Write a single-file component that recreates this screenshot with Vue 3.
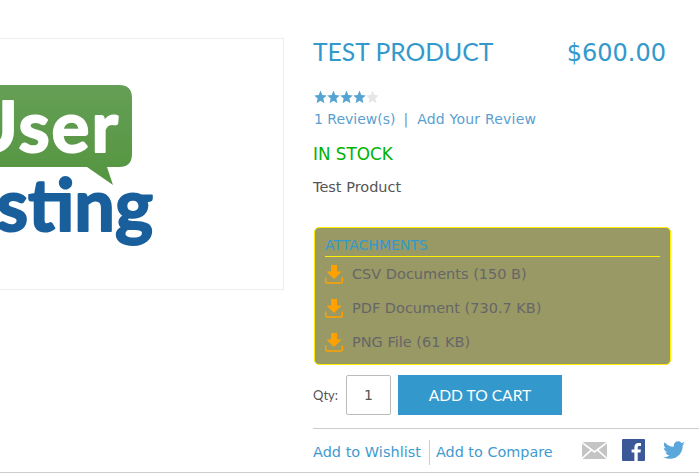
<template>
  <div class="page">
    <div class="gallery">
      <!-- logo picture, cropped on its left side like the page does -->
      <svg class="logo" width="283" height="250" viewBox="0 0 283 250">
        <defs>
          <linearGradient id="bubble" x1="0" y1="0" x2="0" y2="1">
            <stop offset="0" stop-color="#659f56" />
            <stop offset="1" stop-color="#54953f" />
          </linearGradient>
        </defs>
        <path d="M-10 46H119Q132 46 132 59V115Q132 128 119 128H107L113 146L87 128H-10Z" fill="url(#bubble)" />
        <text class="logo-user" x="120" y="113" text-anchor="end">User</text>
        <text class="logo-test" x="153" y="192" text-anchor="end">esting</text>
      </svg>
    </div>

    <div class="info">
      <div class="head">
        <h1 class="title">TEST PRODUCT</h1>
        <div class="price">$600.00</div>
      </div>

      <div class="stars">
        <svg v-for="n in 5" :key="n" width="13" height="14" viewBox="0 0 24 24" preserveAspectRatio="none">
          <path d="M12 1l3.300 7.600 8.200.7-6.200 5.400 1.900 8.100L12 18.500l-7.200 4.300 1.900-8.100L.5 9.300l8.200-.7z" :fill="n < 5 ? '#55a4d2' : '#e6e6e6'" />
        </svg>
      </div>
      <div class="reviews">
        <a>1 Review(s)</a><span class="sep">|</span><a class="add-review">Add Your Review</a>
      </div>

      <div class="stock">IN STOCK</div>
      <p class="short">Test Product</p>

      <div class="attachments">
        <div class="att-title">ATTACHMENTS</div>
        <div v-for="file in files" :key="file" class="att-row">
          <svg width="18" height="19" viewBox="0 0 18 19">
            <path d="M6 0h6v6.500h4.500L9 14 1.500 6.500H6z" fill="#ffa200" />
            <path d="M.7 12.500v3.700q0 1.800 1.800 1.800h13q1.800 0 1.800-1.800v-3.700" fill="none" stroke="#ffa200" stroke-width="1.400" />
          </svg>
          <span>{{ file }}</span>
        </div>
      </div>

      <div class="cart">
        <label class="qty-label">Qty:</label>
        <div class="qty">1</div>
        <button class="add">ADD TO CART</button>
      </div>

      <div class="links">
        <a class="wish">Add to Wishlist</a>
        <a class="compare">Add to Compare</a>
        <div class="share">
          <svg width="25" height="17" viewBox="0 0 25 17">
            <rect width="25" height="17" fill="#c4c4c4" />
            <path d="M0 .5L12.500 10 25 .5M0 16.500L9.500 7.800M25 16.500L15.500 7.800" fill="none" stroke="#fff" stroke-width="1.600" />
          </svg>
          <svg width="23" height="22" viewBox="0 0 23 22">
            <rect width="23" height="22" rx="1" fill="#3b5998" />
            <path d="M15.700 22v-8.400h2.800l.4-3.200h-3.200V8.400c0-.9.300-1.500 1.600-1.500h1.700V4c-.3 0-1.300-.1-2.500-.1-2.400 0-4.100 1.500-4.100 4.200v2.300H9.600v3.200h2.800V22z" fill="#fff" />
          </svg>
          <svg class="bird" width="22" height="19" viewBox="0 0 24 20">
            <path d="M24 2.400c-.9.400-1.800.7-2.800.800 1-.6 1.800-1.600 2.200-2.700-1 .6-2 1-3.100 1.200C19.300.7 18 0 16.600 0c-2.700 0-4.900 2.200-4.900 4.900 0 .4 0 .8.100 1.100C7.700 5.800 4.100 3.900 1.700.9c-.4.700-.7 1.600-.7 2.500 0 1.700.9 3.200 2.200 4.100-.8 0-1.600-.2-2.200-.6v.1c0 2.400 1.700 4.400 3.900 4.800-.4.100-.8.200-1.300.2-.3 0-.6 0-.9-.1.600 2 2.400 3.400 4.600 3.400-1.700 1.300-3.800 2.100-6.100 2.100-.4 0-.8 0-1.200-.1C2.200 18.200 4.800 19 7.500 19c9.100 0 14-7.500 14-14v-.6c1-.7 1.800-1.500 2.500-2z" fill="#5ba7dc" />
          </svg>
        </div>
      </div>
    </div>
  </div>
</template>

<script setup>
const files = ['CSV Documents (150 B)', 'PDF Document (730.7 KB)', 'PNG File (61 KB)']
</script>

<style>
html, body {
  overflow: hidden;
  background: #fff;
}
</style>

<style scoped>
.page {
  display: flex;
  gap: 29px;
  width: 699px;
  height: 473px;
  box-sizing: border-box;
  padding-top: 38px;
  border-bottom: 1px solid #ccc;
  overflow: hidden;
  font-family: "DejaVu Sans", Verdana, sans-serif;
  font-size: 14px;
  color: #555;
}

.gallery {
  flex: none;
  width: 284px;
  height: 252px;
  box-sizing: border-box;
  border: 1px solid #eee;
  border-left: none;
}

.logo {
  display: block;
}

.logo-user,
.logo-test {
  font-family: Lato, sans-serif;
  font-weight: 700;
  font-size: 72px;
  stroke-width: 2;
  stroke-linejoin: round;
}

.logo-user {
  font-size: 71px;
  letter-spacing: 2px;
  fill: #fff;
  stroke: #fff;
}

.logo-test {
  fill: #195f9c;
  stroke: #195f9c;
}

.info {
  flex: none;
  width: 386px;
  margin-top: -38px;
  padding-top: 37px;
}

.head {
  display: flex;
  justify-content: space-between;
  width: 353px;
  color: #3399cc;
}

.title {
  margin: 0;
  font-family: Lato, sans-serif;
  font-weight: 400;
  font-size: 24.700px;
  line-height: 30px;
}

.price {
  font-size: 24px;
  line-height: 32px;
}

.stars {
  display: flex;
  margin: 21px 0 0 1px;
  height: 14px;
}

.reviews {
  margin: 6px 0 0 1px;
  line-height: 18px;
  color: #5a9fd0;
}

.add-review {
  letter-spacing: .2px;
}

.sep {
  margin: 0 9px 0 8px;
  color: #6f93b3;
}

.stock {
  margin-top: 16px;
  font-size: 16.800px;
  line-height: 20px;
  color: #00b300;
}

.short {
  margin: 14px 0 0;
  font-size: 14.500px;
  line-height: 18px;
}

.attachments {
  width: 357px;
  height: 138px;
  box-sizing: border-box;
  margin: 31px 0 0 1px;
  padding: 7px 10px;
  background: #999966;
  border: 1.500px solid #ffee00;
  border-radius: 5px;
}

.att-title {
  color: #3399cc;
  font-size: 14px;
  line-height: 21px;
  border-bottom: 1px solid #ffee00;
}

.att-row {
  display: flex;
  align-items: center;
  gap: 9px;
  height: 34px;
  font-size: 14.500px;
  color: #666;
}

.att-row:first-of-type {
  margin-top: 3px;
}

.cart {
  display: flex;
  align-items: center;
  margin-top: 10px;
}

.qty-label {
  font-family: Lato, sans-serif;
  font-size: 13px;
  margin-right: 8px;
}

.qty {
  width: 43px;
  height: 38px;
  display: flex;
  align-items: center;
  justify-content: center;
  border: 1px solid #bbb;
  border-radius: 2px;
  font-size: 14px;
}

.add {
  width: 164px;
  height: 40px;
  margin-left: 7px;
  border: none;
  background: #3399cc;
  color: #fff;
  font-family: Lato, sans-serif;
  font-size: 15.600px;
  cursor: pointer;
}

.links {
  display: flex;
  align-items: center;
  height: 44px;
  margin-top: 13px;
  border-top: 1px solid #ccc;
  color: #3f9ad0;
  font-size: 14.400px;
}

.wish {
  padding-right: 8px;
  border-right: 1px solid #ccc;
  font-size: 14.500px;
  line-height: 25px;
  margin-top: 2px;
}

.compare {
  margin: 2px 0 0 6px;
}

.share {
  display: flex;
  align-items: center;
  gap: 15px;
  margin: 0 0 2px 29px;
}

.bird {
  margin-left: 3px;
}
</style>
